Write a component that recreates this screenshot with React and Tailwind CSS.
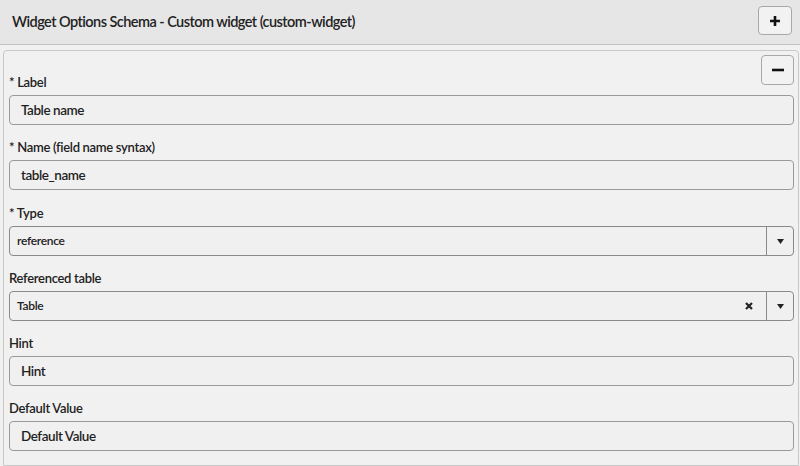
import React from 'react';

const font = { fontFamily: '"Lato", "Open Sans", sans-serif' };

function Caret() {
    return (
        <svg width="7" height="5" viewBox="0 0 7 5">
            <path d="M0 0 H7 L3.5 5 Z" fill="#222" />
        </svg>
    );
}

function FieldLabel({ label, required }) {
    return (
        <label className="block h-[17px] leading-[17px] text-[13px] font-semibold text-[#222] mb-[4px] tracking-[-0.3px]">
            {required && <span>* </span>}
            {label}
        </label>
    );
}

function TextField({ label, required, value, className = 'mb-[14px]' }) {
    return (
        <div className={className}>
            <FieldLabel label={label} required={required} />
            <div className="h-[30px] rounded-[4px] border border-[#9a9a9a] bg-[#f0f0f0] flex items-center pl-[11px] text-[13.5px] font-semibold text-[#1f1f1f] tracking-[-0.45px]">
                {value}
            </div>
        </div>
    );
}

function SelectField({ label, required, value, clearable }) {
    return (
        <div className="mb-[14px]">
            <FieldLabel label={label} required={required} />
            <div className="h-[30px] rounded-[4px] border border-[#8a8a8a] bg-[#f0f0f0] flex items-center text-[12px] font-semibold text-[#222] tracking-[-0.3px]">
                <span className="flex-1 pl-[7px]">{value}</span>
                {clearable && (
                    <svg className="mr-[13px]" width="8" height="8" viewBox="0 0 8 8">
                        <path d="M1 1 L7 7 M7 1 L1 7" stroke="#222" strokeWidth="2.2" />
                    </svg>
                )}
                <span className="w-[27px] h-full border-l border-[#8a8a8a] flex items-center justify-center">
                    <Caret />
                </span>
            </div>
        </div>
    );
}

export default function App() {
    return (
        <div className="w-[800px] h-[466px] overflow-hidden bg-[#f1f1f1]" style={font}>
            {/* Header */}
            <div className="h-[45px] bg-[#e6e6e6] border-b border-[#c4c4c4] flex items-center justify-between pl-[12px] pr-[8px]">
                <h2 className="text-[14.5px] font-semibold text-[#222] tracking-[-0.55px]">
                    Widget Options Schema - Custom widget (custom-widget)
                </h2>
                <button className="w-[34px] h-[29px] mt-[-3px] rounded-[4px] border border-[#a8a8a8] bg-[#f2f2f2] flex items-center justify-center">
                    <svg width="12" height="12" viewBox="0 0 12 12">
                        <path d="M6 1 V11 M1 6 H11" stroke="#111" strokeWidth="2.6" />
                    </svg>
                </button>
            </div>

            {/* Schema item */}
            <div className="relative mt-[5px] ml-[3px] mr-[1px] border border-[#c8c8c8] rounded-t-[4px] pt-[23px] pl-[5px] pr-[4px]">
                <button className="absolute top-[4px] right-[4px] w-[33px] h-[30px] rounded-[4px] border border-[#a8a8a8] bg-[#f2f2f2] flex items-center justify-center">
                    <svg width="12" height="4" viewBox="0 0 12 4">
                        <path d="M0 2 H12" stroke="#111" strokeWidth="2.6" />
                    </svg>
                </button>

                <TextField label="Label" required value="Table name" />
                <TextField label="Name (field name syntax)" required value="table_name" className="mb-[15px]" />
                <SelectField label="Type" required value="reference" />
                <SelectField label="Referenced table" value="Table" clearable />
                <TextField label="Hint" value="Hint" />
                <TextField label="Default Value" value="Default Value" />
            </div>
        </div>
    );
}
